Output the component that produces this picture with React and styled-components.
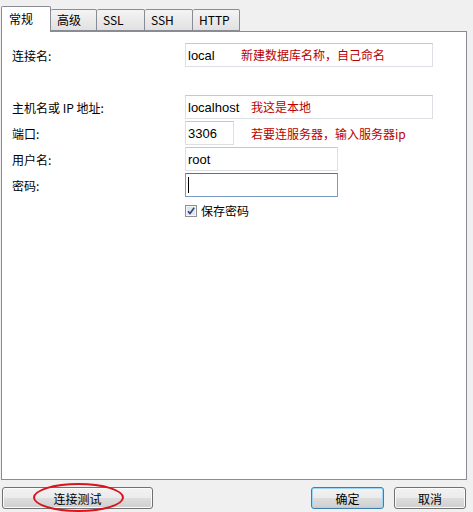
import React from 'react';
import styled, { createGlobalStyle } from 'styled-components';

const Global = createGlobalStyle`
  body {
    margin: 0;
    background: #f0f0f0;
    font-family: "Noto Sans CJK SC", "Liberation Sans", sans-serif;
    font-size: 12px;
    color: #000;
  }
`

const Window = styled.div`
  width: 473px;
  height: 512px;
  display: flex;
  flex-direction: column;
  background: #f0f0f0;
  overflow: hidden;
`

const TabStrip = styled.div`
  display: flex;
  align-items: flex-end;
  height: 31px;
  padding-left: 1px;
`

const Tab = styled.div`
  box-sizing: border-box;
  width: ${p => p.w}px;
  height: ${p => (p.active ? 26 : 22)}px;
  margin-bottom: ${p => (p.active ? -1 : 0)}px;
  padding: ${p => (p.active ? '4px 0 0 7px' : '2px 0 0 6px')};
  border: 1px solid #898c95;
  border-bottom: ${p => (p.active ? 'none' : '1px solid #898c95')};
  border-left: ${p => (p.first || p.active ? '1px solid #898c95' : 'none')};
  border-radius: 2px 2px 0 0;
  background: ${p => (p.active ? '#fff' : 'linear-gradient(#f4f4f4, #e1e1e1)')};
  position: relative;
  z-index: ${p => (p.active ? 2 : 1)};
  font-size: 12px;
  line-height: 16px;
  white-space: nowrap;
`

const Panel = styled.div`
  box-sizing: border-box;
  width: 466px;
  height: 449px;
  margin-left: 1px;
  border: 1px solid #898c95;
  background: #fff;
  padding: 11px 0 0 10px;
  display: flex;
  flex-direction: column;
`

const Row = styled.div`
  display: flex;
  align-items: center;
  height: 24px;
  margin-bottom: ${p => p.gap ?? 2}px;
`

const Label = styled.div`
  width: 173px;
  flex-shrink: 0;
  font-size: 12px;
  padding-top: 1px;
`

const Field = styled.div`
  box-sizing: border-box;
  position: relative;
  width: ${p => p.w}px;
  height: 24px;
  border: 1px solid ${p => (p.focus ? '#7a9cc4' : '#dcdfe4')};
  border-top-color: ${p => (p.focus ? '#3d7bad' : '#c3c7ce')};
  background: #fff;
  padding-left: 2px;
  display: flex;
  align-items: center;
  font-family: "Liberation Sans", "Noto Sans CJK SC", sans-serif;
  font-size: 13px;
`

const Caret = styled.span`
  width: 1px;
  height: 16px;
  background: #000;
`

const Note = styled.span`
  font-family: "Noto Sans CJK SC", sans-serif;
  font-size: 12px;
  color: #b80000;
  white-space: nowrap;
  ${p => (p.over ? `position: absolute; left: ${p.over}px; top: 2px;` : `margin-left: ${p.ml}px;`)}
`

const CheckRow = styled.label`
  display: flex;
  align-items: center;
  gap: 4px;
  margin: 3px 0 0 173px;
  font-size: 12px;
`

const Footer = styled.div`
  display: flex;
  align-items: center;
  padding: 7px 7px 0 2px;
  gap: 10px;
`

const Button = styled.div`
  box-sizing: border-box;
  position: relative;
  width: ${p => p.w}px;
  height: 22px;
  border: 1px solid ${p => (p.primary ? '#3c7fb1' : '#707070')};
  border-radius: 3px;
  background: linear-gradient(#f2f2f2 0%, #ebebeb 50%, #dddddd 51%, #cfcfcf 100%);
  box-shadow: ${p => (p.primary ? 'inset 0 0 0 1px #9fd6f5' : 'inset 0 0 0 1px #fbfbfb')};
  display: flex;
  align-items: center;
  justify-content: center;
  font-size: 12px;
  margin-left: ${p => (p.push ? 'auto' : '0')};
`

const Ring = styled.span`
  position: absolute;
  left: 30px;
  top: -5px;
  width: 91px;
  height: 29px;
  box-sizing: border-box;
  border: 2px solid #d8141e;
  border-radius: 50%;
`

const CheckIcon = () => (
  <svg width="12" height="12" viewBox="0 0 12 12">
    <rect x="0.5" y="0.5" width="11" height="11" fill="#f4f6f8" stroke="#8f8f8f" />
    <rect x="2" y="2" width="8" height="8" fill="#dfe6ee" />
    <path d="M3 6.2 L5 8.5 L9.2 2.8" fill="none" stroke="#31407a" strokeWidth="1.6" />
  </svg>
)

const tabs = [
  { name: '常规', w: 50 },
  { name: '高级', w: 46 },
  { name: 'SSL', w: 48 },
  { name: 'SSH', w: 48 },
  { name: 'HTTP', w: 47 },
]

const App = () => {
  return (
    <Window>
      <Global />
      <TabStrip>
        {tabs.map((t, i) => (
          <Tab key={t.name} w={t.w} active={i === 0} first={i === 0}>{t.name}</Tab>
        ))}
      </TabStrip>
      <Panel>
        <Row gap={28}>
          <Label>连接名:</Label>
          <Field w={248}>
            local
            <Note over={55}>新建数据库名称，自己命名</Note>
          </Field>
        </Row>
        <Row>
          <Label>主机名或 IP 地址:</Label>
          <Field w={248}>
            localhost
            <Note over={65}>我这是本地</Note>
          </Field>
        </Row>
        <Row>
          <Label>端口:</Label>
          <Field w={49}>3306</Field>
          <Note ml={17}>若要连服务器，输入服务器ip</Note>
        </Row>
        <Row>
          <Label>用户名:</Label>
          <Field w={153}>root</Field>
        </Row>
        <Row>
          <Label>密码:</Label>
          <Field w={153} focus>
            <Caret />
          </Field>
        </Row>
        <CheckRow>
          <CheckIcon />
          保存密码
        </CheckRow>
      </Panel>
      <Footer>
        <Button w={151}>
          连接测试
          <Ring />
        </Button>
        <Button w={73} primary push>确定</Button>
        <Button w={72}>取消</Button>
      </Footer>
    </Window>
  )
}

export default App;
